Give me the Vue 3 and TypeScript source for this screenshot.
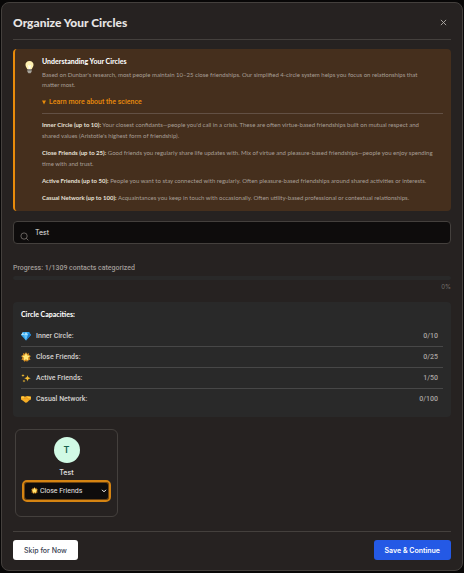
<script setup lang="ts">
import { computed, ref } from 'vue'

interface Circle {
  id: string
  name: string
  count: number
  max: number
  description: string
}

const circles: Circle[] = [
  {
    id: 'inner',
    name: 'Inner Circle',
    count: 0,
    max: 10,
    description:
      "Your closest confidants—people you'd call in a crisis. These are often virtue-based friendships built on mutual respect and shared values (Aristotle's highest form of friendship).",
  },
  {
    id: 'close',
    name: 'Close Friends',
    count: 0,
    max: 25,
    description:
      'Good friends you regularly share life updates with. Mix of virtue and pleasure-based friendships—people you enjoy spending time with and trust.',
  },
  {
    id: 'active',
    name: 'Active Friends',
    count: 1,
    max: 50,
    description:
      'People you want to stay connected with regularly. Often pleasure-based friendships around shared activities or interests.',
  },
  {
    id: 'casual',
    name: 'Casual Network',
    count: 0,
    max: 100,
    description:
      'Acquaintances you keep in touch with occasionally. Often utility-based professional or contextual relationships.',
  },
]

const query = ref('Test')
const selected = ref('close')
const categorized = 1
const total = 1309
const percent = computed(() => Math.round((categorized / total) * 100))
</script>

<template>
  <main class="modal">
    <header class="header">
      <h1>Organize Your Circles</h1>
      <button class="close" type="button" aria-label="Close">
        <svg viewBox="0 0 8 8"><path d="M1 1l6 6M7 1L1 7" /></svg>
      </button>
    </header>

    <section class="info">
      <svg class="bulb" viewBox="0 0 12 16" aria-hidden="true">
        <path d="M6 1C3 1 1.4 3 1.4 5.4c0 2 1.300 3 1.900 5h5.400c.6-2 1.900-3 1.900-5C10.600 3 9 1 6 1z" fill="#fff0b0" />
        <path d="M4.200 5.500L5.200 10h1.600l1-4.500L6 6.600z" fill="#fffdf0" />
        <path d="M3.600 10.500h4.800v3L7.200 15H4.800l-1.200-1.500z" fill="#a9a59c" />
        <path d="M3.600 12h4.800" stroke="#6b665e" stroke-width=".7" />
      </svg>
      <div class="info-body">
        <h2>Understanding Your Circles</h2>
        <p class="intro">
          Based on Dunbar's research, most people maintain 10–25 close friendships. Our simplified 4-circle system helps
          you focus on relationships that matter most.
        </p>
        <button class="learn" type="button" aria-expanded="true">
          <svg viewBox="0 0 4 5" aria-hidden="true"><path d="M0 .5h4L2 4.500z" /></svg>
          Learn more about the science
        </button>
        <div class="science">
          <p v-for="c in circles" :key="c.id">
            <strong>{{ c.name }} (up to {{ c.max }}):</strong> <span>{{ c.description }}</span>
          </p>
        </div>
      </div>
    </section>

    <div class="search">
      <svg viewBox="0 0 10 10" aria-hidden="true"><circle cx="4.500" cy="4.500" r="3.500" /><path d="M7 7l2.300 2.300" /></svg>
      <input v-model="query" type="text" aria-label="Search contacts" />
    </div>

    <section class="progress">
      <p>Progress: {{ categorized }}/{{ total }} contacts categorized</p>
      <div class="track"><div class="fill" :style="{ width: percent + '%' }"></div></div>
      <span>{{ percent }}%</span>
    </section>

    <section class="capacities">
      <h2>Circle Capacities:</h2>
      <ul>
        <li v-for="c in circles" :key="c.id">
          <svg class="emoji" viewBox="0 0 20 20" aria-hidden="true">
            <g v-if="c.id === 'inner'">
              <path d="M4 2h12l4 6-10 11L0 8z" fill="#35a7ee" />
              <path d="M4 2l2 6H0zM10 2l4 6H6z" fill="#a5e1ff" />
              <path d="M6 8h8l-4 11z" fill="#61c3fa" />
              <path d="M16 2l4 6h-6z" fill="#1f83d6" />
              <path d="M14 8h6L10 19z" fill="#1b78c6" />
            </g>
            <g v-else-if="c.id === 'close'">
              <path d="M10 0l2 4 4-2-.5 4.500L20 8l-3 3 2 5-4.500-.5L12 20l-2-3-3 3-1.500-4.500L1 16l2-5-3-3 4.500-1.500L4 2l4 2z" fill="#d98b1c" />
              <path d="M10 1.500l2.400 5.500 6 .6-4.500 4 1.300 6.100-5.200-3.200-5.200 3.200 1.300-6.100-4.500-4 6-.6z" fill="#ffe777" />
            </g>
            <g v-else-if="c.id === 'active'" fill="#f5bd32">
              <path d="M13 4c.7 4 2 5.500 6.500 6.500-4.500 1-5.800 2.500-6.500 6.500-.7-4-2-5.500-6.500-6.500C11 9.500 12.300 8 13 4z" />
              <path d="M4 1.500c.4 2.200 1 3 3.500 3.500C5 5.500 4.400 6.300 4 8.500 3.600 6.300 3 5.500.5 5 3 4.500 3.600 3.700 4 1.500zM6 13c.3 2 1 2.700 3 3-2 .4-2.700 1-3 3-.3-2-1-2.600-3-3 2-.3 2.700-1 3-3z" />
            </g>
            <g v-else>
              <path d="M0 5l4-1 4 1.500L12 4l4 .5L20 5v6l-3 1-5 5-3 .5-5-4L0 11z" fill="#f5ad25" />
              <path d="M8 5.500L6.500 9l2 .8L11 8l6 4" fill="none" stroke="#d98a18" stroke-width="1" />
              <path d="M1 6l3-1 3 1-1 2-5 .5zM12 5.500l7 .5v2l-4 .5z" fill="#ffca43" />
            </g>
          </svg>
          <span class="name">{{ c.name }}:</span>
          <span class="count">{{ c.count }}/{{ c.max }}</span>
        </li>
      </ul>
    </section>

    <article class="contact">
      <div class="avatar" aria-hidden="true">T</div>
      <label for="circle-select">Test</label>
      <div class="select-wrap">
        <select id="circle-select" v-model="selected">
          <option v-for="c in circles" :key="c.id" :value="c.id">{{ c.name }}</option>
        </select>
        <svg class="star" viewBox="0 0 20 20" aria-hidden="true">
          <path d="M10 0l2 4 4-2-.5 4.500L20 8l-3 3 2 5-4.500-.5L12 20l-2-3-3 3-1.500-4.500L1 16l2-5-3-3 4.500-1.500L4 2l4 2z" fill="#d98b1c" />
          <path d="M10 1.500l2.400 5.500 6 .6-4.500 4 1.300 6.100-5.200-3.200-5.200 3.200 1.300-6.100-4.500-4 6-.6z" fill="#ffe777" />
        </svg>
        <svg class="chevron" viewBox="0 0 6 4" aria-hidden="true"><path d="M1 .8l2 2 2-2" /></svg>
      </div>
    </article>

    <footer class="footer">
      <button class="skip" type="button">Skip for Now</button>
      <button class="save" type="button">Save &amp; Continue</button>
    </footer>
  </main>
</template>

<style>
body {
  background: #080707;
}
</style>

<style scoped>
* {
  box-sizing: border-box;
}
h1,
h2,
p,
ul {
  margin: 0;
  padding: 0;
}
button,
input,
select {
  font-family: inherit;
}
.modal {
  margin: 2px 1px 0;
  padding: 0 11px 10px;
  border: 1px solid #44403d;
  border-radius: 8px;
  background: #262221;
  color: #e7e5e4;
  font-family: Inter, sans-serif;
  font-size: 7px;
}
.header {
  display: flex;
  align-items: center;
  justify-content: space-between;
  height: 37px;
  padding-top: 3px;
  border-bottom: 1px solid #44403d;
}
h1 {
  font: 900 12px/16px Lato, sans-serif;
}
.close {
  display: flex;
  padding: 4px;
  border: 0;
  background: none;
}
.close svg {
  width: 7px;
  height: 7px;
  fill: none;
  stroke: #b5b0ac;
}
.info {
  display: flex;
  gap: 7px;
  margin-top: 9px;
  padding: 7px 8px 8px 9px;
  border-left: 2px solid #e88b0b;
  border-radius: 4px;
  background: #452f1d;
}
.bulb {
  flex: none;
  width: 11px;
  height: 14px;
  margin-top: 4px;
}
.info-body {
  flex: 1;
  font-family: Lato, sans-serif;
  font-size: 6px;
}
.info-body p {
  padding-right: 8px;
}
h2 {
  font: 900 7px/11px Lato, sans-serif;
  color: #fafaf9;
}
.intro {
  margin-top: 3px;
  line-height: 10px;
  color: #a89f96;
}
.learn {
  display: flex;
  align-items: center;
  gap: 3px;
  margin-top: 7px;
  padding: 0;
  border: 0;
  background: none;
  color: #e88b0b;
  font: 500 7px/10px Roboto, sans-serif;
}
.learn svg {
  width: 4px;
  height: 5px;
  fill: currentColor;
}
.science {
  display: flex;
  flex-direction: column;
  gap: 6px;
  margin-top: 6px;
  padding-top: 5px;
  border-top: 1px solid #625044;
  color: #a89f96;
  line-height: 11px;
}
.science strong {
  color: #e7e0d8;
}
.search {
  display: flex;
  align-items: center;
  height: 23px;
  margin-top: 10px;
  padding-left: 6px;
  border: 1px solid #44403d;
  border-radius: 4px;
  background: #0e0c0c;
}
.search svg {
  width: 9px;
  height: 9px;
  margin-top: 7px;
  fill: none;
  stroke: #88827e;
  stroke-width: 0.8;
}
.search input {
  flex: 1;
  min-width: 0;
  padding: 0 6px;
  border: 0;
  outline: 0;
  background: none;
  color: #e7e5e4;
  font-size: 7px;
}
.progress {
  margin-top: 19px;
}
.progress p {
  color: #a19c98;
  font: 500 7px/10px Roboto, sans-serif;
}
.track {
  height: 4px;
  margin-top: 3px;
  border-radius: 2px;
  background: #292929;
}
.fill {
  height: 100%;
  background: #2563eb;
}
.progress span {
  display: block;
  margin-top: 2px;
  color: #77716c;
  font-size: 6px;
  line-height: 10px;
  text-align: right;
}
.capacities {
  margin-top: 10px;
  padding: 7px 8px 8px;
  border-radius: 4px;
  background: #292929;
}
.capacities ul {
  margin-top: 5px;
  list-style: none;
}
.capacities li {
  display: flex;
  align-items: center;
  gap: 5px;
  height: 21px;
  padding-right: 5px;
}
.capacities li + li {
  border-top: 1px solid #474747;
}
.emoji {
  width: 10px;
  height: 10px;
}
.name,
.count {
  font: 500 7px/10px Roboto, sans-serif;
}
.name {
  flex: 1;
  color: #d3d0ce;
}
.count {
  color: #a8a3a0;
}
.contact {
  display: flex;
  flex-direction: column;
  align-items: center;
  width: 103px;
  margin: 12px 0 0 2px;
  padding: 7px 6px 14px;
  border: 1px solid #44403d;
  border-radius: 6px;
}
.avatar {
  width: 26px;
  border-radius: 50%;
  background: #d1fae5;
  color: #17634e;
  font-weight: 600;
  font-size: 9px;
  line-height: 26px;
  text-align: center;
}
.contact label {
  margin: 4px 0 2px;
  font-weight: 500;
  font-size: 7px;
  line-height: 11px;
}
.select-wrap {
  position: relative;
  width: 100%;
}
.select-wrap select {
  display: block;
  width: 100%;
  height: 22px;
  padding: 0 14px 0 16px;
  border: 2px solid #d58412;
  border-radius: 5px;
  outline: 0;
  appearance: none;
  background: #0e0c0c;
  box-shadow: inset 0 0 0 1px #6c4312;
  color: #e7e5e4;
  font: 400 7px Roboto, sans-serif;
}
.star,
.chevron {
  position: absolute;
  pointer-events: none;
}
.star {
  top: 7px;
  left: 9px;
  width: 7px;
  height: 7px;
}
.chevron {
  top: 9px;
  right: 4px;
  width: 6px;
  height: 4px;
  fill: none;
  stroke: #fff;
}
.footer {
  display: flex;
  justify-content: space-between;
  margin-top: 14px;
  padding-top: 8px;
  border-top: 1px solid #44403d;
}
.footer button {
  height: 20px;
  padding: 0 11px;
  border: 0;
  border-radius: 3px;
  font-weight: 500;
  font-size: 7px;
}
.footer .skip {
  background: #fff;
  color: #374151;
}
.footer .save {
  background: #2459e5;
  color: #fff;
  font-weight: 600;
}
</style>
